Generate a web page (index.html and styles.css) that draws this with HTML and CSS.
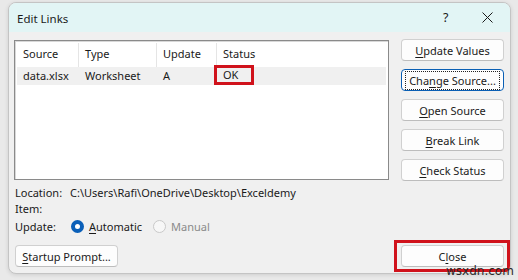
FILE: index.html
```html
<!DOCTYPE html>
<html>
<head>
<meta charset="utf-8">
<link rel="stylesheet" href="styles.css">
</head>
<body>
<div class="win">
  <div class="title">
    <span class="title-text">Edit Links</span>
    <span class="help">?</span>
    <svg class="close-x" width="11" height="11" viewBox="0 0 11 11"><path d="M0.5 0.5L10.5 10.5M10.5 0.5L0.5 10.5" stroke="#1a1a1a" stroke-width="1" fill="none"/></svg>
  </div>
  <div class="content">
    <div class="top">
      <div class="list">
        <div class="row head">
          <div class="c c1">Source</div>
          <div class="c c2">Type</div>
          <div class="c c3">Update</div>
          <div class="c c4">Status</div>
        </div>
        <div class="row data">
          <div class="c c1">data.xlsx</div>
          <div class="c c2">Worksheet</div>
          <div class="c c3">A</div>
          <div class="c c4"><span class="ok">OK</span></div>
        </div>
      </div>
      <div class="btns">
        <div class="btn"><span class="t"><u>U</u>pdate Values</span></div>
        <div class="btn focus"><span class="t dots">Cha<u>n</u>ge Source...</span></div>
        <div class="btn"><span class="t"><u>O</u>pen Source</span></div>
        <div class="btn"><span class="t"><u>B</u>reak Link</span></div>
        <div class="btn"><span class="t"><u>C</u>heck Status</span></div>
      </div>
    </div>
    <div class="info">
      <div class="irow"><span class="lab">Location:</span><span>C:\Users\Rafi\OneDrive\Desktop\Exceldemy</span></div>
      <div class="irow"><span class="lab">Item:</span></div>
      <div class="irow upd"><span class="lab">Update:</span>
        <span class="radio on"></span><span class="rl"><u>A</u>utomatic</span>
        <span class="radio off"></span><span class="rl dis">Manual</span>
      </div>
    </div>
    <div class="bottom">
      <div class="btn startup"><span class="t"><u>S</u>tartup Prompt...</span></div>
      <div class="closewrap"><div class="btn"><span class="t">C<u>l</u>ose</span></div></div>
    </div>
  </div>
</div>
<div class="wm">wsxdn.com</div>
</body>
</html>
```
FILE: styles.css
```css
html, body {
  margin: 0;
  padding: 0;
  background: #e9e9e9;
  width: 518px;
  height: 280px;
  overflow: hidden;
  font-family: "Noto Sans", "Open Sans", sans-serif;
  font-size: 11px;
  color: #1a1a1a;
}
.win {
  position: relative;
  margin: 2px 7px 0 8px;
  width: 501px;
  height: 270px;
  border: 1px solid #c4c4c4;
  border-radius: 8px;
  background: #f0f0f0;
  overflow: hidden;
  box-shadow: 0 1px 4px rgba(0,0,0,0.12);
}
.title {
  height: 29px;
  background: #e2f5f5;
  display: flex;
  align-items: center;
  padding-left: 8px;
  font-size: 11.5px;
}
.title-text { flex: 1; padding-top: 1px; }
.help { width: 10px; margin-right: 29px; font-size: 12.5px; }
.close-x { margin-right: 17px; }
.content { padding: 8px 6px 0 5px; }
.top { display: flex; gap: 12px; }
.list {
  width: 370px;
  height: 136px;
  background: #fff;
  border: 1px solid #8a8a8a;
  box-shadow: inset 1px 1px 0 #d8d8d8;
  padding: 2px 2px 0 2px;
}
.row { display: flex; align-items: center; }
.head { height: 24px; }
.head .c { padding-bottom: 3px; }
.data { height: 18px; background: #f0f0f0; }
.data .c { padding-bottom: 1px; }
.c { padding-left: 6px; box-sizing: border-box; height: 100%; display: flex; align-items: center; white-space: nowrap; }
.head .c { border-right: 1px solid #e5e5e5; }
.head .c4 { border-right: none; }
.c1 { width: 62px; }
.c2 { width: 78px; }
.c3 { width: 60px; }
.c4 { flex: 1; }
.ok {
  border: 3px solid #d0121b;
  padding: 0 13px 0 6px;
  margin-left: -9px;
  height: 14px;
  line-height: 14px;
  margin-top: -1px;
}
.btns { display: flex; flex-direction: column; gap: 8px; margin-top: -1px; }
.btn {
  width: 101px;
  height: 20px;
  border: 1px solid #d0d0d0;
  border-bottom-color: #bdbdbd;
  border-radius: 4px;
  background: #fdfdfd;
  display: flex;
  align-items: center;
  justify-content: center;
  flex-shrink: 0;
}
.t { white-space: nowrap; }
.btn.focus { border: 1px solid #0a5fb4; box-shadow: inset 0 0 0 1px #fff; }
.dots { outline: 1px dotted #222; outline-offset: 1px; padding: 0 2px; }
.info { padding: 3px 0 0 1px; }
.irow { height: 16px; display: flex; align-items: center; white-space: nowrap; }
.lab { width: 55px; flex-shrink: 0; }
.upd { height: 19px; margin-top: 1px; }
.radio {
  width: 13px; height: 13px; border-radius: 50%;
  box-sizing: border-box;
  margin-right: 5px;
  flex-shrink: 0;
}
.radio.on { border: 4px solid #0a5fb8; background: #fff; margin-left: 1px; }
.radio.off { border: 1px solid #c9c9c9; background: #f7f7f7; margin-left: 11px; }
.rl.dis { color: #8a8a8a; }
.bottom { display: flex; justify-content: space-between; align-items: center; margin-top: 4px; }
.btn.startup { width: 101px; margin-left: 1px; }
.closewrap { border: 3px solid #d0121b; padding: 2px 3px 2px 4px; margin-right: -6px; }
u { text-decoration-thickness: 1px; text-underline-offset: 2px; }
.wm {
  position: absolute;
  left: 446px;
  top: 264px;
  font-family: "DejaVu Sans", sans-serif;
  font-size: 12px;
  line-height: 14px;
  color: #2a2a2a;
}
```
